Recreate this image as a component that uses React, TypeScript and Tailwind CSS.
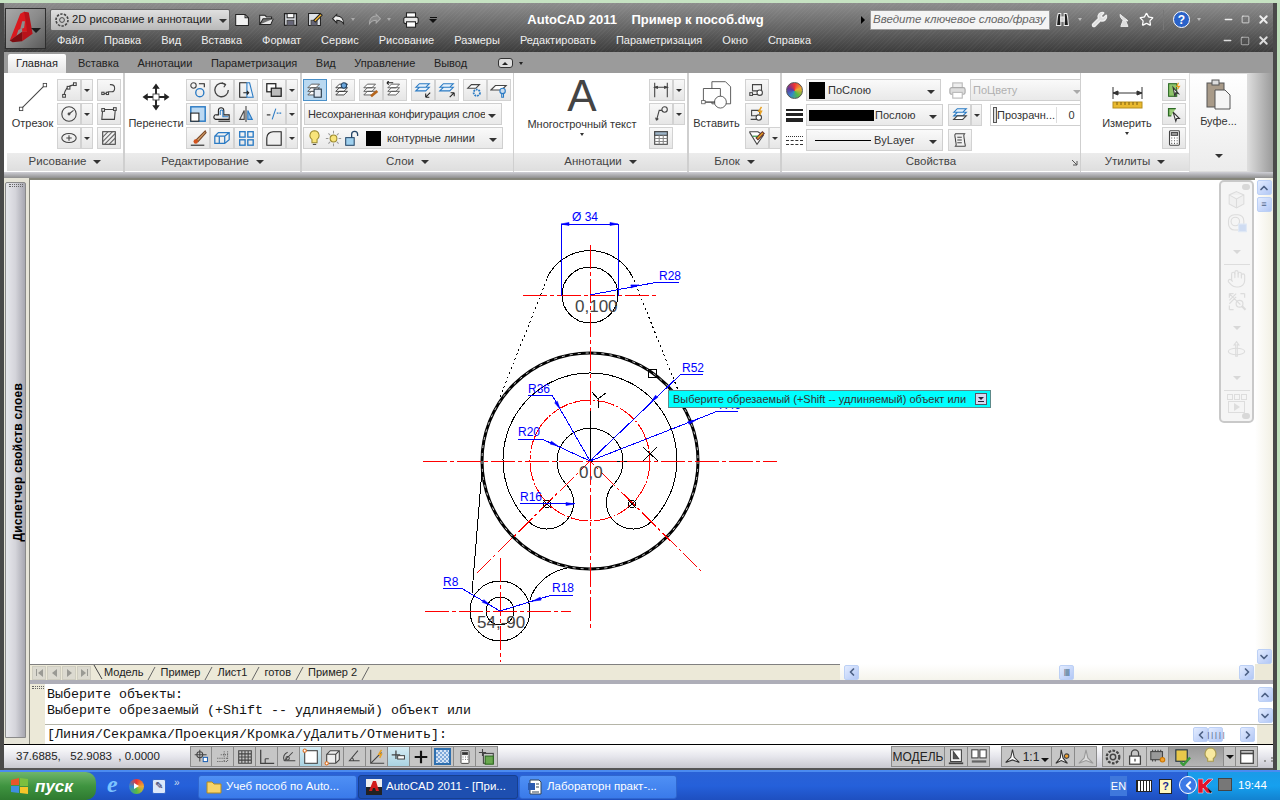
import type { ReactNode } from "react"
import { ChevronLeft, ChevronRight, ChevronUp, ChevronDown, Hand, Star, Wrench, Minus, X, Square } from "lucide-react"

const Ic = ({ children, s = 18, cls = "" }: { children: ReactNode; s?: number; cls?: string }) => (
  <svg viewBox="0 0 20 20" width={s} height={s} fill="none" stroke="#444" strokeWidth="1.2" className={cls}>
    {children}
  </svg>
)

const Caret = ({ cls = "border-t-[#333]" }: { cls?: string }) => (
  <span className={"inline-block w-0 h-0 border-x-[4px] border-x-transparent border-t-[4px] " + cls} />
)

const Btn = ({ children, w = "w-[24px]", active = false }: { children?: ReactNode; w?: string; active?: boolean }) => (
  <div
    className={
      "h-[22px] flex items-center justify-center border shrink-0 " +
      w +
      (active
        ? " bg-[#b9d8f0] border-[#4a90c8]"
        : " bg-gradient-to-b from-[#f8f8f8] to-[#e6e6e6] border-[#d2d2d2]")
    }
  >
    {children}
  </div>
)

const Split = ({ children }: { children: ReactNode }) => (
  <div className="flex">
    <Btn w="w-[24px]">{children}</Btn>
    <Btn w="w-[12px]">
      <span className="inline-block w-0 h-0 border-x-[3px] border-x-transparent border-t-[3px] border-t-[#333]" />
    </Btn>
  </div>
)

const Panel = ({ title, w, caret = true, launcher = false, children }: { title: string; w: string; caret?: boolean; launcher?: boolean; children: ReactNode }) => (
  <div className={"flex flex-col shrink-0 " + w}>
    <div className="h-[80px] bg-white flex overflow-hidden">{children}</div>
    <div className="h-[18px] bg-gradient-to-b from-[#ececec] to-[#dedede] flex items-center justify-center gap-[7px] text-[11.5px] text-[#444] relative">
      {title}
      {caret && <Caret />}
      {launcher && (
        <svg width="7" height="7" viewBox="0 0 7 7" stroke="#555" fill="none" className="absolute right-[2px] top-[6px]">
          <path d="M1 1l5 5M6 2v4H2" />
        </svg>
      )}
    </div>
  </div>
)

const Big = ({ label, w, children, arrow = false }: { label: string; w: string; children: ReactNode; arrow?: boolean }) => (
  <div className={"flex flex-col items-center shrink-0 pt-[6px] " + w}>
    <div className="h-[36px] flex items-center justify-center">{children}</div>
    <div className="text-[11px] text-[#333] mt-[1px] leading-[14px] whitespace-nowrap">{label}</div>
    {arrow && <span className="mt-[2px] inline-block w-0 h-0 border-x-[2px] border-x-transparent border-t-[3px] border-t-[#333]" />}
  </div>
)

const Col = ({ children, cls = "" }: { children: ReactNode; cls?: string }) => (
  <div className={"flex flex-col gap-[2px] pt-[6px] shrink-0 " + cls}>{children}</div>
)

const Combo = ({ children, w, disabled = false }: { children: ReactNode; w: string; disabled?: boolean }) => (
  <div
    className={
      "h-[22px] flex items-center border border-[#cfcfcf] bg-gradient-to-b from-[#fafafa] to-[#e9e9e9] px-[2px] text-[11px] shrink-0 " +
      w +
      (disabled ? " text-[#b0b0b0]" : " text-[#333]")
    }
  >
    <div className="flex-1 flex items-center gap-[2px] overflow-hidden whitespace-nowrap">{children}</div>
    <span className="mx-[3px]">
      <Caret cls={disabled ? "border-t-[#aaa]" : "border-t-[#333]"} />
    </span>
  </div>
)

const Blk = ({ w }: { w: string }) => <span className={"inline-block h-[17px] bg-black shrink-0 " + w} />

const ScrollBtn = ({ children }: { children: ReactNode }) => (
  <div className="w-[15px] h-[15px] rounded-[2px] bg-gradient-to-br from-[#e3ecff] to-[#b2c7f5] border border-[#bcd0f5] flex items-center justify-center text-[#4d6185] shrink-0">
    {children}
  </div>
)

function Logo() {
  return (
    <div className="w-[41px] h-[41px] ml-[1px] border border-[#2e2e2e] bg-gradient-to-br from-[#a8a8a8] via-[#8a8a8a] to-[#5a5a5a] relative shrink-0">
      <svg viewBox="0 0 41 41" width="39" height="39">
        <polygon points="4,33 15,5 19,3 24,4 22,24 17,24 17,20 13,22 11,28" fill="#d9191f" />
        <polygon points="19,3 24,4 28,26 17,34 17,24 22,24 21,14" fill="#b8121a" />
        <polygon points="4,33 11,28 17,24 17,34 7,35" fill="#7e0d12" />
        <polygon points="17,13 20,13 19,20 15,21" fill="#8d8d8d" />
      </svg>
      <span className="absolute right-[4px] top-[19px] w-0 h-0 border-x-[5px] border-x-transparent border-t-[5px] border-t-[#1c1c1c]" />
    </div>
  )
}

function TitleBar() {
  const menus = ["Файл", "Правка", "Вид", "Вставка", "Формат", "Сервис", "Рисование", "Размеры", "Редактировать", "Параметризация", "Окно", "Справка"]
  return (
    <div className="h-[49px] bg-[repeating-linear-gradient(135deg,rgba(255,255,255,0.035)_0_1px,transparent_1px_3px),linear-gradient(#8d8d8d,#666,#3c3c3c)] flex pt-[5px] shrink-0 font-['Liberation_Sans',sans-serif]">
      <Logo />
      <div className="flex-1 flex flex-col pl-[4px]">
        <div className="h-[23px] flex items-center">
          <div className="w-[180px] h-[22px] bg-gradient-to-b from-[#e0e0e0] to-[#b9b9b9] border border-[#666] flex items-center pl-[3px] text-[11.2px] text-[#222] rounded-[2px] shrink-0">
            <Ic s={16}>
              <circle cx="10" cy="10" r="3" />
              <circle cx="10" cy="10" r="7.5" strokeDasharray="3 1.6" strokeWidth="2" />
            </Ic>
            <span className="ml-[2px] flex-1 whitespace-nowrap">2D рисование и аннотации</span>
            <span className="mr-[2px]">
              <Caret />
            </span>
          </div>
          <div className="flex items-center ml-[4px] gap-[7px] w-[262px] shrink-0">
            <Ic s={17}>
              <path d="M2 4h11l4 4v9H2z" fill="#f2f2f2" stroke="#222" />
              <path d="M13 4v4h4" stroke="#222" />
            </Ic>
            <Ic s={17}>
              <path d="M2 16V5h6l2 2h6v2H6l-4 7h13l3-7" fill="#e8e8e8" stroke="#222" />
            </Ic>
            <Ic s={17}>
              <path d="M3 3h14v14H3z" fill="#dfe3e8" stroke="#222" strokeWidth="1.5" />
              <rect x="6" y="3" width="8" height="5" fill="#fff" stroke="#222" />
              <rect x="6" y="11" width="8" height="6" fill="#667" />
            </Ic>
            <Ic s={17}>
              <path d="M3 3h14v14H3z" fill="#dfe3e8" stroke="#222" />
              <rect x="6" y="11" width="7" height="6" fill="#667" />
              <path d="M9 11l8-8 2 2-8 8z" fill="#f5b52a" stroke="#222" />
            </Ic>
            <div className="flex items-center gap-[4px]">
              <Ic s={17}>
                <path d="M8 4L3 9l5 5V11c4 0 6 1 8 4 0-6-3-9-8-9z" fill="#eee" stroke="#222" />
              </Ic>
              <span className="inline-block w-0 h-0 border-x-[2px] border-x-transparent border-t-[3px] border-t-[#aaa]" />
            </div>
            <div className="flex items-center gap-[4px] ml-[4px]">
              <Ic s={17}>
                <path d="M12 4l5 5-5 5V11c-4 0-6 1-8 4 0-6 3-9 8-9z" fill="#8a8a8a" stroke="#aaa" />
              </Ic>
              <span className="inline-block w-0 h-0 border-x-[2px] border-x-transparent border-t-[3px] border-t-[#aaa]" />
            </div>
            <span className="ml-[4px]">
              <Ic s={18}>
                <rect x="5" y="2" width="10" height="5" fill="#fff" stroke="#222" />
                <rect x="2" y="7" width="16" height="7" rx="2" fill="#e8e8e8" stroke="#222" />
                <rect x="5" y="12" width="10" height="6" fill="#fff" stroke="#222" />
              </Ic>
            </span>
            <div className="flex flex-col items-center ml-[2px]">
              <span className="w-[7px] h-[1px] bg-[#111] mb-[1px]" />
              <Caret cls="border-t-[#111]" />
            </div>
          </div>
          <div className="w-[299px] text-center text-white font-bold text-[13px] whitespace-pre shrink-0">
            AutoCAD 2011{"    "}Пример к пособ.dwg
          </div>
          <div className="flex items-center ml-[66px]">
            <span className="inline-block w-0 h-0 border-y-[4px] border-y-transparent border-l-[4px] border-l-black mr-[5px]" />
            <div className="w-[180px] h-[20px] bg-[#f4f4f4] border border-[#999] text-[11.5px] italic text-[#666] flex items-center pl-[2px] whitespace-nowrap shrink-0">
              Введите ключевое слово/фразу
            </div>
            <div className="flex items-center ml-[4px] text-white">
              <Ic s={17}>
                <path d="M3 17l1-10 1-4h3v14zM12 17V3h3l1 4 1 10z" fill="#1c1c1c" stroke="#eee" />
                <path d="M8 7h4v5H8z" fill="#ccc" stroke="#eee" />
              </Ic>
              <span className="inline-block w-0 h-0 border-x-[2px] border-x-transparent border-t-[3px] border-t-[#bbb] ml-[7px]" />
              <Wrench size={17} color="#eee" fill="#ddd" className="ml-[9px]" />
              <span className="ml-[8px]">
                <Ic s={16}>
                  <path d="M5 3a8 8 0 0 0 10 8zM9 10l-3 8h9l-3-7" fill="#ddd" stroke="#eee" />
                </Ic>
              </span>
              <Star size={15} color="#fff" fill="#777" className="ml-[7px]" />
              <span className="w-[1px] h-[20px] bg-[#777] ml-[9px]" />
              <div className="w-[17px] h-[17px] rounded-full bg-[#2a62c8] border border-white text-white font-bold text-[12px] flex items-center justify-center ml-[9px]">?</div>
              <span className="inline-block w-0 h-0 border-x-[2px] border-x-transparent border-t-[3px] border-t-[#bbb] ml-[7px]" />
            </div>
          </div>
          <div className="flex items-center ml-auto mr-[3px] gap-[7px]">
            <Minus size={11} color="#eee" strokeWidth={3} />
            <Square size={9} color="#eee" strokeWidth={2} />
            <X size={13} color="#eee" strokeWidth={3.5} />
          </div>
        </div>
        <div className="flex-1 flex items-center text-[11px] text-[#eee] gap-[20px] pl-[7px] pb-[2px]">
          {menus.map(m => (
            <span key={m}>{m}</span>
          ))}
          <div className="flex items-center ml-auto mr-[3px] gap-[7px]">
            <Minus size={11} color="#ddd" strokeWidth={3} />
            <Square size={10} color="#ddd" strokeWidth={1.5} />
            <X size={13} color="#ddd" strokeWidth={3.5} />
          </div>
        </div>
      </div>
    </div>
  )
}

function Tabs() {
  const tabs = ["Вставка", "Аннотации", "Параметризация", "Вид", "Управление", "Вывод"]
  return (
    <div className="h-[21px] bg-[#9b9b9b] flex items-end shrink-0 pl-[4px] text-[11px] text-[#222]">
      <div className="w-[58px] h-[19px] bg-gradient-to-b from-white to-[#e4e4e4] rounded-t-[2px] flex items-center justify-center">Главная</div>
      <div className="flex items-center h-[20px] gap-[18.500px] ml-[12px]">
        {tabs.map(t => (
          <span key={t}>{t}</span>
        ))}
        <span className="flex items-center gap-[6px] ml-[12px]">
          <span className="w-[15px] h-[10px] rounded-[3px] bg-[#ddd] border border-[#333] flex items-center justify-center">
            <span className="inline-block w-0 h-0 border-x-[3px] border-x-transparent border-b-[3px] border-b-[#222]" />
          </span>
          <span className="inline-block w-0 h-0 border-x-[2px] border-x-transparent border-t-[3px] border-t-[#222]" />
        </span>
      </div>
    </div>
  )
}

const B = "#2b7bc4"

function DrawPanel() {
  return (
    <>
      <Big label="Отрезок" w="w-[45px] ml-[3px]">
        <Ic s={34}>
          <path d="M3 17L17 3" strokeWidth="0.6" />
          <rect x="2" y="16" width="2" height="2" strokeWidth="0.5" fill="#fff" />
          <rect x="16" y="2" width="2" height="2" strokeWidth="0.5" fill="#fff" />
        </Ic>
      </Big>
      <Col cls="ml-[2px]">
        <Split>
          <Ic>
            <path d="M4 17C5 10 9 5 16 4" />
            <rect x="3" y="15" width="3" height="3" fill="#fff" />
            <rect x="8" y="6" width="3" height="3" fill="#fff" />
            <rect x="15" y="2" width="3" height="3" fill="#fff" />
          </Ic>
        </Split>
        <Split>
          <Ic>
            <circle cx="10" cy="10" r="8" />
            <circle cx="10" cy="10" r="1" />
            <path d="M10 10l5-4" />
          </Ic>
        </Split>
        <Split>
          <Ic>
            <ellipse cx="10" cy="10" rx="8" ry="5" />
            <path d="M7 10h6M10 7v6" />
          </Ic>
        </Split>
      </Col>
      <Col cls="ml-[4px]">
        <Btn>
          <Ic>
            <path d="M3 14h2c3 0 3-2 5-2h3c4 0 5-8-1-8h-1" />
            <rect x="2" y="12.5" width="2.5" height="2.5" fill="#fff" />
            <rect x="7" y="12.5" width="2.5" height="2.5" fill="#fff" />
          </Ic>
        </Btn>
        <Btn>
          <Ic>
            <path d="M3 5h14l-1 11H2z" />
            <rect x="2" y="4" width="3" height="3" fill="#fff" />
            <rect x="15" y="3" width="3" height="3" fill="#fff" />
          </Ic>
        </Btn>
        <Btn>
          <Ic>
            <rect x="3" y="3" width="14" height="14" />
            <path d="M3 9l6-6M3 14L14 3M5 17L17 5M10 17l7-7" stroke="#666" />
          </Ic>
        </Btn>
      </Col>
    </>
  )
}

function EditPanel() {
  return (
    <>
      <Big label="Перенести" w="w-[54px] ml-[4px]">
        <Ic s={30}>
          <path d="M10 1L7.500 4.500h5zM10 19l-2.500-3.500h5zM1 10l3.500-2.500v5zM19 10l-3.500-2.500v5z" fill="#222" stroke="none" />
          <path d="M10 4v4M10 12v4M4 10h4M12 10h4" strokeWidth="1.300" stroke="#222" />
          <rect x="8" y="8" width="4" height="4" fill="#fff" strokeWidth="0.6" />
        </Ic>
      </Big>
      <Col cls="ml-[3px]">
        <div className="flex">
          <Btn>
            <Ic>
              <circle cx="5" cy="5" r="3" />
              <circle cx="12" cy="13" r="4.500" stroke={B} strokeWidth="1.500" />
              <path d="M11 3h6v4" stroke="#222" />
            </Ic>
          </Btn>
          <Btn>
            <Ic>
              <path d="M14 4A7.500 7.500 0 1 0 17 10" strokeWidth="1.500" />
              <path d="M10 2l4 2-2 3" strokeWidth="1.200" />
            </Ic>
          </Btn>
          <Btn>
            <Ic>
              <path d="M11 2H3v16h8" stroke="#222" />
              <path d="M11 2h3l4 16h-7z" stroke={B} fill="#e8f1fa" />
              <path d="M7 13h6M11 11l2 2-2 2" stroke="#222" />
            </Ic>
          </Btn>
        </div>
        <div className="flex">
          <Btn>
            <Ic>
              <rect x="2" y="2" width="16" height="16" stroke={B} strokeWidth="1.600" fill="#bcd9f2" />
              <rect x="2" y="9" width="9" height="9" stroke="#222" fill="#fff" />
            </Ic>
          </Btn>
          <Btn>
            <Ic>
              <path d="M3 16h15v-5h-6V6a3 3 0 0 0-6 0v5H4a2.500 2.500 0 0 0-1 5z" stroke="#222" />
              <path d="M6 18h13" stroke="#222" />
              <path d="M8 11V7a1.500 1.500 0 0 1 3 0v6h6" stroke={B} />
            </Ic>
          </Btn>
          <Btn>
            <Ic>
              <path d="M10 1v18" />
              <path d="M8 6L3 16h5z" />
              <path d="M12 6l5 10h-5z" stroke={B} fill="#8fbde6" />
            </Ic>
          </Btn>
        </div>
        <div className="flex">
          <Btn>
            <Ic>
              <path d="M18 2L8 12l2 2L19 4z" fill="#d9a26a" stroke="#7a4a2a" />
              <circle cx="7.500" cy="14" r="2.500" fill="#d2521c" stroke="none" />
              <path d="M2 18h15" stroke="#222" />
            </Ic>
          </Btn>
          <Btn>
            <Ic>
              <path d="M2 8l4-4h12v8l-5 4H2zM2 8h11v8M13 8l5-4" stroke={B} strokeWidth="1.400" />
              <path d="M7 8v8" stroke={B} strokeWidth="1.400" />
            </Ic>
          </Btn>
          <Btn>
            <Ic>
              <rect x="3" y="3" width="6" height="6" stroke={B} strokeWidth="1.500" />
              <rect x="12" y="3" width="6" height="6" stroke={B} strokeWidth="1.500" />
              <rect x="3" y="12" width="6" height="6" stroke={B} strokeWidth="1.500" />
              <rect x="12" y="12" width="6" height="6" stroke={B} strokeWidth="1.500" />
            </Ic>
          </Btn>
        </div>
      </Col>
      <Col cls="ml-[4px]">
        <Split>
          <Ic>
            <rect x="2" y="3" width="10" height="9" fill="#fff" strokeWidth="1.400" stroke="#222" />
            <rect x="7" y="8" width="11" height="9" fill="#bbb" stroke="#222" strokeWidth="1.400" />
          </Ic>
        </Split>
        <Split>
          <Ic>
            <path d="M2 11h4" stroke="#222" />
            <path d="M13 9h6" stroke={B} strokeDasharray="2 1" />
            <path d="M8 16l4-12" stroke={B} />
          </Ic>
        </Split>
        <Split>
          <Ic>
            <path d="M2 18V10c0-4 3-7 7-7h9v15z" fill="#efefef" stroke="#222" />
          </Ic>
        </Split>
      </Col>
    </>
  )
}

const Stack = ({ extra, thin = "#555" }: { extra?: ReactNode; thin?: string }) => (
  <Ic>
    <g stroke={thin} strokeWidth="1">
      <path d="M2 7.500l4-4h9l-4 4zM2 11.500l4-4h9l-4 4zM2 15.500l4-4h9l-4 4z" fill="#fff" />
    </g>
    {extra}
  </Ic>
)

function LayerPanel() {
  return (
    <div className="flex flex-col gap-[2px] pt-[6px] pl-[1px]">
      <div className="flex">
        <Btn active>
          <Stack extra={<rect x="9" y="9" width="8" height="9" fill="#dfe8f2" stroke="#234" />} />
        </Btn>
        <div className="w-[4px]" />
        <Btn>
          <Stack thin="#333" extra={<circle cx="11" cy="5" r="3" fill="#6aa6dc" stroke="#246" />} />
        </Btn>
        <div className="w-[4px]" />
        <Btn>
          <Stack extra={<path d="M10 17l7-6" stroke="#b5651d" strokeWidth="3" />} />
        </Btn>
        <Btn>
          <Stack extra={<path d="M1 2h7M1 2l2-2M1 2l2 2" stroke="#222" />} />
        </Btn>
        <div className="w-[4px]" />
        <Btn>
          <Ic>
            <path d="M2 7l4-4h11l-4 4zM2 11l4-4h11l-4 4z" stroke={B} fill="#e6f1fb" />
            <path d="M18 13l-5 5M13 18h4M13 18v-4" stroke="#222" />
          </Ic>
        </Btn>
        <Btn>
          <Ic>
            <path d="M2 7l4-4h11l-4 4zM2 11l4-4h11l-4 4z" stroke={B} fill="#e6f1fb" />
            <path d="M13 18l5-5M18 13h-4M18 13v4" stroke="#222" />
          </Ic>
        </Btn>
        <div className="w-[4px]" />
        <Btn>
          <Ic>
            <path d="M2 8l4-4h9l-4 4z" fill="#fff" />
            <circle cx="12" cy="13" r="3.500" stroke={B} strokeWidth="2" strokeDasharray="2 1" />
          </Ic>
        </Btn>
        <Btn>
          <Ic>
            <path d="M1 10l5-5h12l-5 5z" fill="#fff" />
            <circle cx="14" cy="11" r="3" fill="#cde" stroke={B} />
            <path d="M13 14v4h2v-4" stroke={B} />
          </Ic>
        </Btn>
      </div>
      <Combo w="w-[198px] ml-[1px]">
        <span className="px-[1px] tracking-[-0.15px]">Несохраненная конфигурация слоев</span>
      </Combo>
      <Combo w="w-[200px]">
        <Ic s={17}>
          <path d="M10 1a5.500 5.500 0 0 0-3 10v4h6v-4a5.500 5.500 0 0 0-3-10z" fill="#f8e47a" stroke="#9a8a30" />
          <path d="M8 17h4" />
        </Ic>
        <Ic s={17}>
          <circle cx="10" cy="10" r="4" fill="#f8e47a" stroke="#9a8a30" />
          <path d="M10 1v3M10 16v3M1 10h3M16 10h3M4 4l2 2M14 14l2 2M16 4l-2 2M4 16l2-2" stroke="#999" />
        </Ic>
        <Ic s={17}>
          <rect x="2" y="9" width="10" height="9" fill="#9fd0ee" stroke="#246" />
          <path d="M9 9V5a3.500 3.500 0 0 1 7 0v2" stroke="#246" strokeWidth="1.500" />
        </Ic>
        <span className="w-[15px] h-[15px] bg-black mx-[3px] shrink-0" />
        <span className="ml-[1px]">контурные линии</span>
      </Combo>
    </div>
  )
}

function AnnoPanel() {
  return (
    <>
      <div className="w-[110px] ml-[13px] flex flex-col items-center pt-[1px] shrink-0">
        <span className="text-[44px] leading-[44px] text-[#444]">A</span>
        <span className="text-[11px] text-[#333] leading-[14px] -mt-[1px] whitespace-nowrap">Многострочный текст</span>
        <span className="mt-[2px] inline-block w-0 h-0 border-x-[2px] border-x-transparent border-t-[3px] border-t-[#333]" />
      </div>
      <Col cls="ml-[12px]">
        <Split>
          <Ic>
            <path d="M3 2v16M17 2v16M3 7h14" />
            <path d="M3 7l3-1v2zM17 7l-3-1v2z" fill="#444" />
          </Ic>
        </Split>
        <Split>
          <Ic>
            <circle cx="14" cy="5" r="3" />
            <path d="M11 6H8L5 17M5 17l-1-3M5 17l2-2" />
          </Ic>
        </Split>
        <Btn w="w-[24px]">
          <Ic>
            <rect x="3" y="3" width="14" height="14" fill="#fff" />
            <rect x="3" y="3" width="14" height="4" fill="#9db4c8" />
            <path d="M3 10.5h14M3 13.8h14M8 7v10M12.5 7v10" stroke="#888" />
          </Ic>
        </Btn>
      </Col>
    </>
  )
}

function BlockPanel() {
  return (
    <>
      <Big label="Вставить" w="w-[47px] ml-[4px]">
        <Ic s={34}>
          <path d="M7 1h8l3 3v10H7z" fill="#fff" strokeWidth="0.5" />
          <path d="M2 5h10v8H2z" fill="#fff" strokeWidth="0.5" />
          <circle cx="12" cy="13" r="3.5" fill="#fff" strokeWidth="0.5" />
          <rect x="1" y="12" width="2" height="2" fill="#fff" strokeWidth="0.4" />
          <path d="M3 13h6" strokeWidth="0.5" />
        </Ic>
      </Big>
      <Col cls="ml-[5px]">
        <Btn>
          <Ic>
            <path d="M5 4h10v7H5zM3 15h8" />
            <circle cx="13" cy="13" r="3" fill="#fff" />
            <rect x="2" y="13" width="3" height="3" fill="#fff" />
          </Ic>
        </Btn>
        <Btn>
          <Ic>
            <path d="M4 6h9v6H4zM3 16h7" />
            <circle cx="12" cy="14" r="3" fill="#fff" />
            <path d="M15 2l-3 5h3l-2 4" stroke="#e8a020" strokeWidth="1.6" />
          </Ic>
        </Btn>
        <Split>
          <Ic>
            <path d="M2 4l8 13 7-10-6-4H2z" fill="#fff" />
            <path d="M9 10l7-7 2 2-7 7z" fill="#e8a020" stroke="#633" />
            <path d="M5 8h6" stroke="#283" />
          </Ic>
        </Split>
      </Col>
    </>
  )
}

function PropsPanel() {
  return (
    <>
      <Col cls="ml-[4px] !gap-[3px]">
        <div className="h-[22px] flex items-center">
          <span className="w-[17px] h-[17px] rounded-full bg-[conic-gradient(#e33,#ea3,#5b4,#38c,#639,#e33)] border border-[#555]" />
        </div>
        <div className="h-[22px] flex flex-col justify-center gap-[2px]">
          <span className="w-[17px] h-[2px] bg-[#222]" />
          <span className="w-[17px] h-[3px] bg-[#222]" />
          <span className="w-[17px] h-[4px] bg-[#222]" />
        </div>
        <div className="h-[22px] flex flex-col justify-center gap-[3px]">
          <span className="w-[17px] h-0 border-t border-dotted border-[#333]" />
          <span className="w-[17px] h-0 border-t border-dashed border-[#333]" />
          <span className="w-[17px] h-0 border-t border-dashed border-[#333]" />
        </div>
      </Col>
      <Col cls="ml-[3px] !gap-[3px]">
        <Combo w="w-[135px]">
          <Blk w="w-[16px]" />
          <span className="ml-[1px]">ПоСлою</span>
        </Combo>
        <Combo w="w-[137px]">
          <Blk w="w-[65px] !h-[11px]" />
          <span className="-ml-[1px]">Послою</span>
        </Combo>
        <Combo w="w-[137px]">
          <span className="w-[56px] h-[1px] bg-black ml-[6px]" />
          <span className="ml-[1px]">ByLayer</span>
        </Combo>
      </Col>
      <Col cls="ml-[5px] !gap-[3px]">
        <div className="flex items-center h-[22px]">
          <Ic s={19}>
            <rect x="5" y="2" width="10" height="5" fill="#eee" stroke="#bbb" />
            <rect x="2" y="7" width="16" height="7" rx="2" fill="#ddd" stroke="#aaa" />
            <rect x="5" y="12" width="10" height="6" fill="#fff" stroke="#bbb" />
          </Ic>
          <span className="ml-[3px]">
            <Combo w="w-[117px]" disabled>
              ПоЦвету
            </Combo>
          </span>
        </div>
        <div className="flex items-center h-[22px]">
          <div className="flex">
            <Btn w="w-[23px]">
              <Ic>
                <path d="M3 7l4-4h10l-4 4zM3 11l4-4h10l-4 4z" stroke={B} fill="#e6f1fb" />
                <path d="M3 15l4-4h10l-4 4z" fill="#fff" />
              </Ic>
            </Btn>
            <Btn w="w-[11px]">
              <span className="inline-block w-0 h-0 border-x-[3px] border-x-transparent border-t-[3px] border-t-[#333]" />
            </Btn>
          </div>
          <div className="ml-[8px] w-[97px] h-[22px] border border-[#cfcfcf] bg-white flex items-center text-[11px] text-[#333]">
            <span className="w-[4px] h-[16px] ml-[2px] border border-[#555] bg-[#ddd]" />
            <span className="flex-1 whitespace-nowrap">Прозрачн...</span>
            <span className="w-[30px] text-center border-l border-[#ddd]">0</span>
          </div>
        </div>
        <Btn>
          <Ic>
            <path d="M5 3h10c-2 2 0 5 0 8s2 6 0 6H5c2-2 0-4 0-7S3 4 5 3z" fill="#f0f0f0" />
            <path d="M7 7h5M7 10h5M7 13h5" />
          </Ic>
        </Btn>
      </Col>
    </>
  )
}

function UtilPanel() {
  return (
    <>
      <Big label="Измерить" w="w-[50px] ml-[21px]" arrow>
        <svg width="31" height="28" viewBox="0 0 31 28" fill="none" stroke="#333">
          <path d="M1 4v12M30 4v12M1 10h29" />
          <path d="M1 10l5-2v4zM30 10l-5-2v4z" fill="#333" />
          <rect x="1" y="19" width="29" height="6" fill="#e9b92f" stroke="#b58d1c" />
          <path d="M5 19v3M9 19v3M13 19v3M17 19v3M21 19v3M25 19v3" stroke="#7a5d10" />
        </svg>
      </Big>
      <Col cls="ml-[10px]">
        <Btn>
          <Ic>
            <rect x="4" y="3" width="9" height="14" fill="#8ec46a" stroke="#2c6a25" />
            <path d="M9 7l6 7-3-1-1 4z" fill="#fff" stroke="#333" />
            <path d="M15 2l-2 4h3l-2 3" stroke="#e8a020" strokeWidth="1.3" />
          </Ic>
        </Btn>
        <Btn>
          <Ic>
            <path d="M12 4H4v8h3" stroke="#2c6a25" strokeWidth="1.5" fill="#9ccf7a" />
            <path d="M9 8l7 7-3 0-1 3z" fill="#fff" stroke="#333" />
          </Ic>
        </Btn>
        <Btn>
          <Ic>
            <rect x="5" y="2" width="11" height="16" rx="1" fill="#fff" />
            <rect x="7" y="4" width="7" height="3" fill="#aaa" />
            <path d="M7 10h1M10 10h1M13 10h1M7 13h1M10 13h1M13 13h1M7 16h1M10 16h1M13 16h1" strokeWidth="1.2" />
          </Ic>
        </Btn>
      </Col>
    </>
  )
}

function Clipboard() {
  return (
    <div className="w-[59px] h-[99px] bg-gradient-to-b from-white to-[#ececec] border border-[#ddd] flex flex-col items-center shrink-0">
      <div className="pt-[5px] h-[38px]">
        <svg width="26" height="31" viewBox="0 0 26 31" fill="none" stroke="#555">
          <rect x="1" y="4" width="17" height="24" fill="#a89a88" />
          <rect x="6" y="1" width="7" height="5" fill="#ddd" />
          <path d="M9 11h10l5 5v14H9z" fill="#f5f5f5" />
        </svg>
      </div>
      <span className="text-[11px] text-[#333] leading-[14px] mt-[2px]">Буфе...</span>
      <span className="mt-auto mb-[6px]">
        <Caret />
      </span>
    </div>
  )
}

function Ribbon() {
  return (
    <div className="h-[99px] flex shrink-0 bg-white pl-[3px] font-['Liberation_Sans',sans-serif]">
      <Panel title="Рисование" w="w-[116px]">
        <DrawPanel />
      </Panel>
      <div className="w-[2px] bg-[#cfcfcf]" />
      <Panel title="Редактирование" w="w-[175px]">
        <EditPanel />
      </Panel>
      <div className="w-[2px] bg-[#cfcfcf]" />
      <Panel title="Слои" w="w-[211px]">
        <LayerPanel />
      </Panel>
      <div className="w-[1px] bg-[#cfcfcf]" />
      <Panel title="Аннотации" w="w-[173px]">
        <AnnoPanel />
      </Panel>
      <div className="w-[2px] bg-[#cfcfcf]" />
      <Panel title="Блок" w="w-[91px]">
        <BlockPanel />
      </Panel>
      <div className="w-[2px] bg-[#cfcfcf]" />
      <Panel title="Свойства" w="w-[298px]" caret={false} launcher>
        <PropsPanel />
      </Panel>
      <div className="w-[1px] bg-[#cfcfcf]" />
      <Panel title="Утилиты" w="w-[108px]">
        <UtilPanel />
      </Panel>
      <Clipboard />
      <div className="flex-1 bg-gradient-to-r from-[#dcdcdc] to-[#9a9a9a]" />
    </div>
  )
}

const RED = "#ff0000"
const BLUE = "#0000ff"

function Arrow({ x, y, a }: { x: number; y: number; a: number }) {
  return <polygon points="0,0 -8,-1.5 -8,1.5" fill={BLUE} stroke={BLUE} strokeWidth="0.6" transform={`translate(${x} ${y}) rotate(${a})`} />
}

function Drawing() {
  const dim = "font-['Liberation_Sans',sans-serif]"
  return (
    <svg viewBox="30 180 1225 484" width="1225" height="484" className={"block " + dim} fill="none">
      <g stroke="#000" strokeWidth="1" shapeRendering="crispEdges">
        <path d="M547 278A47.5 47.5 0 0 1 633 278" />
        <circle cx="590" cy="295" r="28" />
        <path d="M547 279L500 397M634 280L678 390" strokeDasharray="2 3" />
        <path d="M566 484A33 33 0 1 1 614 484A26 26 0 1 0 652 521A87 87 0 1 0 528 521A26 26 0 0 0 566 484" />
        <circle cx="500" cy="611" r="30" />
        <circle cx="500" cy="611" r="14" />
        <path d="M482 470L472 593" />
        <path d="M530 600C534 585 548 572 567 568" />
        <path d="M590 411V461H640" />
        <path d="M592 392L598 399L606 393M598 399V408" />
        <path d="M643 447L658 461M642 462L657 447" />
      </g>
      <circle cx="590" cy="461" r="108" stroke="#000" strokeWidth="3" />
      <circle cx="590" cy="461" r="108" stroke="#fff" strokeWidth="0.8" strokeDasharray="3 5" />
      <g stroke={RED} strokeWidth="1" shapeRendering="crispEdges">
        <path d="M523 295H657M423 461H777M425 611H571" strokeDasharray="24 3 4 3" />
        <path d="M590 245V411M590 461V628M500 558V662" strokeDasharray="24 3 4 3" />
        <path d="M477 573L590 461L702 572" strokeDasharray="20 3 3 3" />
        <path d="M537 432A60 60 0 0 1 643 432M650 461A60 60 0 0 1 530 461" strokeDasharray="18 2 2 2" />
        <path d="M537 432A60 60 0 0 0 530 461" strokeDasharray="18 2 2 2" />
        <path d="M643 432A60 60 0 0 1 650 461" strokeDasharray="18 2 2 2" />
      </g>
      <g stroke="#000" shapeRendering="crispEdges">
        <circle cx="547" cy="504" r="3.5" />
        <circle cx="632" cy="504" r="3.5" />
        <path d="M543 500L551 508M551 500L543 508M628 500L636 508M636 500L628 508" />
        <rect x="648.5" y="369.5" width="8" height="8" />
      </g>
      <g stroke={BLUE} strokeWidth="1" shapeRendering="crispEdges">
        <path d="M561 224V296M618 224V296M561 224H618" />
        <path d="M679 282H658L590 295" />
        <path d="M703 374H681L590 461" />
        <path d="M738 411H718L590 461" />
        <path d="M528 395H552L590 461" />
        <path d="M518 439H542L590 461" />
        <path d="M520 503H575" />
        <path d="M443 588H461L500 611" />
        <path d="M573 595H552L500 611" />
      </g>
      <Arrow x={561} y={224} a={180} />
      <Arrow x={618} y={224} a={0} />
      <Arrow x={639} y={285} a={-10} />
      <Arrow x={651} y={402} a={135} />
      <Arrow x={696} y={420} a={-21} />
      <Arrow x={560} y={409} a={60} />
      <Arrow x={558} y={446} a={25} />
      <Arrow x={574} y={504} a={0} />
      <Arrow x={490} y={605} a={30} />
      <Arrow x={533} y={601} a={163} />
      <g fill={BLUE} fontSize="12">
        <text x="572" y="221">Ø 34</text>
        <text x="659" y="280">R28</text>
        <text x="682" y="372">R52</text>
        <text x="719" y="409">R46</text>
        <text x="528" y="393">R36</text>
        <text x="518" y="436">R20</text>
        <text x="520" y="501">R16</text>
        <text x="443" y="586">R8</text>
        <text x="552" y="592">R18</text>
      </g>
      <g fill="#444" fontSize="17">
        <text x="575" y="312">0,100</text>
        <text x="579" y="478">0,0</text>
        <text x="477" y="628">54,-90</text>
      </g>
    </svg>
  )
}

function NavBar() {
  const c = "#dcdcdc"
  return (
    <div className="absolute left-[1189px] top-0 w-[35px] h-[243px] rounded-[5px] border-2 border-[#c9c9c9] bg-[#f5f5f5] flex flex-col items-center pt-[2px]">
      <span className="self-end mr-[2px] w-[8px] h-[8px] rounded-full bg-[#d8d8d8]" />
      <svg viewBox="0 0 24 24" width="25" height="25" fill="#f0f0f0" stroke={c} strokeWidth="1.3">
        <path d="M12 2l9 4v11l-9 5-9-5V6zM3 6l9 5 9-5M12 11v11" />
      </svg>
      <svg viewBox="0 0 24 24" width="26" height="26" fill="none" stroke={c} strokeWidth="1.3" className="mt-[3px]">
        <rect x="2" y="2" width="18" height="18" rx="7" />
        <circle cx="10" cy="10" r="5" />
        <rect x="14" y="13" width="9" height="9" fill="#cfdcf2" stroke="#dfe8f5" />
      </svg>
      <span className="mt-[4px]">
        <Caret cls="border-t-[#d8d8d8]" />
      </span>
      <span className="w-[26px] h-[1px] bg-[#ddd] mt-[3px]" />
      <Hand size={25} color={c} className="mt-[4px]" strokeWidth={1.4} />
      <svg viewBox="0 0 24 24" width="26" height="26" fill="none" stroke={c} strokeWidth="1.4" className="mt-[2px]">
        <path d="M3 3l13 13M3 15l8-8M11 3L3 11M3 3h5M3 3v5M3 22v-5M3 22h5M21 3v5M21 3h-5" />
        <circle cx="15" cy="15" r="4" />
        <path d="M18 18l4 4" strokeWidth="2.5" />
      </svg>
      <span className="mt-[2px]">
        <Caret cls="border-t-[#d8d8d8]" />
      </span>
      <svg viewBox="0 0 24 24" width="25" height="25" fill="#f4f4f4" stroke={c} strokeWidth="1.3" className="mt-[3px]">
        <path d="M12 2l3 4h-2v14h-2V6H9z" />
        <ellipse cx="12" cy="14" rx="10" ry="4" fill="none" />
      </svg>
      <span className="mt-[3px]">
        <Caret cls="border-t-[#d8d8d8]" />
      </span>
      <span className="w-[26px] h-[1px] bg-[#ddd] mt-[3px]" />
      <div className="flex gap-[1px] mt-[4px]">
        <span className="w-[6px] h-[6px] border border-[#ddd]" />
        <span className="w-[6px] h-[6px] border border-[#ddd]" />
        <span className="w-[6px] h-[6px] border border-[#ddd]" />
      </div>
      <div className="w-[17px] h-[14px] border border-[#ddd] mt-[1px] flex items-center justify-center">
        <span className="w-0 h-0 border-y-[4px] border-y-transparent border-l-[6px] border-l-[#ddd]" />
      </div>
      <span className="self-end mr-[2px] mt-auto mb-[2px] w-[8px] h-[8px] rounded-full bg-[#d8d8d8]" />
    </div>
  )
}

function Tooltip() {
  return (
    <div className="absolute left-[638px] top-[210px] w-[323px] h-[18px] bg-[#00ffff] border border-[#5d8a8a] flex items-center text-[11px] text-[#333] pl-[4px] font-['Liberation_Sans',sans-serif] whitespace-nowrap">
      <span className="flex-1">Выберите обрезаемый (+Shift -- удлиняемый) объект или</span>
      <span className="w-[12px] h-[12px] mr-[3px] bg-[#d8d8f0] border border-[#556] flex flex-col items-center justify-center">
        <span className="w-0 h-0 border-x-[3px] border-x-transparent border-t-[3px] border-t-[#223]" />
        <span className="w-[6px] h-[1px] bg-[#223] mt-[1px]" />
      </span>
    </div>
  )
}

function LayoutTabs() {
  const tabs = ["Пример", "Лист1", "готов", "Пример 2"]
  const Slash = () => (
    <svg width="9" height="14" viewBox="0 0 9 14" stroke="#666" className="mx-[4px]">
      <path d="M1 14L8 1" />
    </svg>
  )
  const Nav = ({ bar, left }: { bar?: boolean; left?: boolean }) => (
    <span className="w-[14px] h-[14px] bg-[#dcdad0] border border-[#cfcdc0] flex items-center justify-center gap-[1px]">
      {bar && left && <span className="w-[1px] h-[7px] bg-[#9a9a94]" />}
      <span className={"w-0 h-0 border-y-[4px] border-y-transparent " + (left ? "border-r-[5px] border-r-[#9a9a94]" : "border-l-[5px] border-l-[#9a9a94]")} />
      {bar && !left && <span className="w-[1px] h-[7px] bg-[#9a9a94]" />}
    </span>
  )
  return (
    <div className="h-[16px] flex shrink-0 items-stretch bg-[#ece9d8] text-[11px] text-[#222] font-['Liberation_Sans',sans-serif]">
      <div className="w-[810px] flex items-center border-t border-[#808080] pl-[2px] shrink-0">
        <div className="flex gap-[1px] w-[61px]">
          <Nav bar left />
          <Nav left />
          <Nav />
          <Nav bar />
        </div>
        <svg width="10" height="15" viewBox="0 0 10 15" stroke="#444">
          <path d="M1 0L9 14" />
        </svg>
        <span className="ml-[1px]">Модель</span>
        <Slash />
        {tabs.map(t => (
          <span key={t} className="flex items-center">
            {t}
            <Slash />
          </span>
        ))}
      </div>
      <div className="flex-1 flex items-center bg-gradient-to-b from-white to-[#f5f4ec] pl-[4px] pr-[1px]">
        <ScrollBtn>
          <ChevronLeft size={12} strokeWidth={3.5} />
        </ScrollBtn>
        <div className="w-[200px]" />
        <ScrollBtn>
          <span className="text-[8px] leading-none tracking-[-1px]">|||||</span>
        </ScrollBtn>
        <div className="flex-1" />
        <ScrollBtn>
          <ChevronRight size={12} strokeWidth={3.5} />
        </ScrollBtn>
      </div>
      <div className="w-[18px] bg-[#ece9d8]" />
    </div>
  )
}

function CommandArea() {
  return (
    <div className="h-[60px] flex shrink-0 bg-[#ece9d8]">
      <div className="w-[15px] flex flex-col items-center pt-[2px] shrink-0">
        <span className="w-[12px] h-[3px] border-y border-dotted border-[#666]" />
      </div>
      <div className="flex-1 flex flex-col bg-white font-['Liberation_Mono',monospace] text-[13.33px] text-[#111] min-w-0">
        <div className="h-[41px] flex border-b border-[#b5b5a8] shrink-0">
          <div className="flex-1 pl-[2px] pt-[3px] leading-[16px]">
            <div>Выберите объекты:</div>
            <div>Выберите обрезаемый (+Shift -- удлиняемый) объект или</div>
          </div>
          <div className="flex flex-col gap-[6px] pt-[3px] pr-[1px] items-center w-[15px]">
            <ScrollBtn>
              <ChevronUp size={12} strokeWidth={3.5} />
            </ScrollBtn>
            <ScrollBtn>
              <ChevronDown size={12} strokeWidth={3.5} />
            </ScrollBtn>
          </div>
        </div>
        <div className="flex-1 flex items-center pl-[2px] leading-none">
          <span className="flex-1 whitespace-nowrap">[Линия/Секрамка/Проекция/Кромка/уДалить/Отменить]:</span>
          <ScrollBtn>
            <ChevronLeft size={12} strokeWidth={3.5} />
          </ScrollBtn>
          <ScrollBtn>
            <span className="text-[8px] leading-none tracking-[-1px]">|||||</span>
          </ScrollBtn>
          <div className="w-[17px]" />
          <ScrollBtn>
            <ChevronRight size={12} strokeWidth={3.5} />
          </ScrollBtn>
          <div className="w-[16px] h-full bg-[#ece9d8] ml-[2px]" />
        </div>
      </div>
    </div>
  )
}

const St = ({ children, w = "w-[22px]", cls = "" }: { children?: ReactNode; w?: string; cls?: string }) => (
  <div className={"h-[21px] flex items-center justify-center border-y border-r border-[#8a8a8a] shrink-0 " + w + " " + (cls || "bg-[#c6c6c6]")}>
    {children}
  </div>
)

function StatusBar() {
  const on = "bg-gradient-to-b from-[#d6ecf4] to-[#aad3e2]"
  return (
    <div className="h-[24px] flex items-center shrink-0 bg-gradient-to-b from-white via-[#e6e6ec] to-[#c9c9d0] border-t border-black font-['Liberation_Sans',sans-serif] text-[#222]">
      <span className="w-[186px] pl-[12px] text-[11.5px] whitespace-pre shrink-0">37.6885,{"   "}52.9083{"  "}, 0.0000</span>
      <St cls="bg-[#c6c6c6] border-l">
        <Ic s={17}>
          <path d="M8 2v14M2 8h14" />
          <circle cx="8" cy="8" r="3.500" />
          <rect x="12" y="11" width="5" height="5" fill="#fff" stroke="#1a5fb4" />
        </Ic>
      </St>
      <St>
        <Ic s={17}>
          <path d="M4 16h12M16 4v12M4 12h12M12 4v12M8 8h8" strokeDasharray="1 1.5" />
        </Ic>
      </St>
      <St>
        <Ic s={18}>
          <path d="M3 3h14v14H3zM3 6.500h14M3 10h14M3 13.500h14M6.500 3v14M10 3v14M13.500 3v14" />
        </Ic>
      </St>
      <St>
        <Ic s={18}>
          <path d="M3 2v15h15" strokeWidth="1.400" />
          <path d="M8 12v5M8 12h4" />
        </Ic>
      </St>
      <St>
        <Ic s={17}>
          <path d="M5 15A7 7 0 0 1 9 5M5 15h13M5 15l10-10" />
          <circle cx="9" cy="12" r="2" />
        </Ic>
      </St>
      <St cls={on}>
        <Ic s={18}>
          <rect x="3" y="3" width="14" height="14" fill="#fff" />
          <circle cx="3" cy="3" r="1.800" fill="#fff" stroke="#e07020" />
        </Ic>
      </St>
      <St>
        <Ic s={18}>
          <path d="M3 7l4-4h10v10l-4 4H3zM3 7h10v10M13 7l4-4" fill="#eee" />
          <circle cx="3" cy="17" r="1.800" fill="#fff" stroke="#e07020" />
        </Ic>
      </St>
      <St>
        <Ic s={17}>
          <path d="M14 3L4 15h12M9 15a6 6 0 0 0-2-4" />
        </Ic>
      </St>
      <St>
        <Ic s={18}>
          <path d="M3 2v15h15M3 17L15 5" />
          <path d="M15 2l-3 5h3l-2 4" stroke="#e8a020" strokeWidth="1.600" />
        </Ic>
      </St>
      <St cls={on}>
        <Ic s={17}>
          <path d="M2 8h10M7 3v10" strokeWidth="1.500" />
          <rect x="9" y="9" width="8" height="4" fill="#fff" />
        </Ic>
      </St>
      <St>
        <Ic s={18}>
          <path d="M10 3v14M3 10h14" stroke="#111" strokeWidth="2.400" />
        </Ic>
      </St>
      <St cls="bg-[#c6c6c6]">
        <span className="w-[17px] h-[17px] border-2 border-[#2f6fae] bg-[repeating-conic-gradient(#7fa8da_0_25%,#d5e4f5_0_50%)] bg-[length:4px_4px]" />
      </St>
      <St>
        <Ic s={16}>
          <rect x="5" y="2" width="10" height="16" rx="1" fill="#fff" />
          <rect x="7" y="4" width="6" height="3" fill="#333" />
          <path d="M7 10h1M10 10h1M13 10h1M7 13h1M10 13h1M13 13h1" />
        </Ic>
      </St>
      <St>
        <Ic s={18}>
          <path d="M5 1v8M1 5h8" />
          <rect x="6" y="6" width="11" height="11" fill="none" />
          <rect x="8" y="9" width="9" height="9" fill="#6aa84f" stroke="#2f6b22" />
        </Ic>
      </St>
      <div className="flex-1" />
      <St w="w-[54px]" cls="bg-[#c6c6c6] border-l">
        <span className="text-[12px] tracking-[0px] text-[#222]">МОДЕЛЬ</span>
      </St>
      <St w="w-[23px]">
        <Ic s={18}>
          <rect x="4" y="2" width="12" height="13" fill="#fff" />
          <path d="M7 4v8h6z" fill="#555" />
          <path d="M2 17h16" strokeWidth="2" />
        </Ic>
      </St>
      <St>
        <Ic s={18}>
          <rect x="2" y="2" width="7" height="9" fill="#fff" />
          <rect x="11" y="2" width="7" height="9" fill="#fff" />
          <path d="M2 15h16" strokeWidth="2.500" stroke="#666" />
        </Ic>
      </St>
      <div className="w-[11px]" />
      <St w="w-[51px]" cls="bg-[#c6c6c6] border-l">
        <Ic s={17}>
          <path d="M10 2l2 9 6 6-8-3-8 3 6-6z" fill="#fff" stroke="#333" />
        </Ic>
        <span className="text-[12px] ml-[2px]">1:1</span>
        <span className="ml-[2px]">
          <Caret cls="border-t-[#111]" />
        </span>
      </St>
      <St w="w-[23px]">
        <Ic s={18}>
          <path d="M8 2l2 9 5 6-7-3-6 3 5-6z" fill="#fff" stroke="#333" />
          <circle cx="14" cy="9" r="2.500" fill="#f0a030" />
        </Ic>
      </St>
      <St>
        <Ic s={18}>
          <path d="M10 2l2 9 6 6-8-3-8 3 6-6z" fill="#ddd" stroke="#999" />
        </Ic>
      </St>
      <div className="w-[5px]" />
      <St cls="bg-[#c6c6c6] border-l">
        <Ic s={18}>
          <circle cx="10" cy="10" r="3" strokeWidth="1.600" />
          <circle cx="10" cy="10" r="7" strokeWidth="2.500" strokeDasharray="3 1.500" />
        </Ic>
      </St>
      <St w="w-[23px]">
        <Ic s={18}>
          <rect x="4" y="9" width="12" height="9" fill="#fff" strokeWidth="1.400" />
          <path d="M6 9V6a4 4 0 0 1 8 0v3M10 12v3" strokeWidth="1.400" />
        </Ic>
      </St>
      <St>
        <Ic s={18}>
          <rect x="2" y="4" width="13" height="9" fill="#999" />
          <path d="M4 2v2M7 2v2M10 2v2M13 2v2M4 13v2M7 13v2" />
          <circle cx="15" cy="13" r="2.500" fill="#f0a030" stroke="#c70" />
        </Ic>
      </St>
      <St w="w-[55px]" cls="bg-gradient-to-b from-[#999] to-[#b5b5b5] gap-[9px]">
        <Ic s={19}>
          <rect x="3" y="3" width="12" height="12" fill="#e8c84a" stroke="#234" />
          <path d="M8 16l3 3 7-8" stroke="#3a9a3a" strokeWidth="2.500" />
        </Ic>
        <Ic s={19}>
          <path d="M10 1a6 6 0 0 0-3 11v3h6v-3a6 6 0 0 0-3-11z" fill="#f8e9a0" stroke="#a89a50" />
        </Ic>
      </St>
      <St w="w-[12px]">
        <Caret cls="border-t-[#111]" />
      </St>
      <St>
        <Ic s={18}>
          <rect x="3" y="3" width="14" height="14" fill="#fff" strokeWidth="1.400" />
          <path d="M3 6h14" strokeWidth="2" />
        </Ic>
      </St>
      <div className="w-[13px] flex flex-wrap justify-end gap-[1px] pt-[6px] ml-[2px]">
        <span className="w-[2px] h-[2px] bg-[#999] ml-[6px]" />
        <span className="w-[2px] h-[2px] bg-[#999] mr-[4px]" />
        <span className="w-[2px] h-[2px] bg-[#999]" />
      </div>
    </div>
  )
}

function Taskbar() {
  const Task = ({ label, active = false, w, icon }: { label: string; active?: boolean; w: string; icon: ReactNode }) => (
    <div
      className={
        "h-[24px] mt-[1px] flex items-center pl-[7px] gap-[4px] text-[11.5px] text-white rounded-[3px] shrink-0 whitespace-nowrap " +
        w +
        (active ? " bg-[#1e4fb0] border border-[#17408f]" : " bg-gradient-to-b from-[#4f90f5] to-[#3a7aea] border border-[#2f66cf]")
      }
    >
      {icon}
      <span>{label}</span>
    </div>
  )
  return (
    <div className="h-[30px] flex items-center bg-gradient-to-b from-[#2a62d6] via-[#2560da] to-[#1e4fc0] border-t-[2px] border-[#4b8bf0] shrink-0 font-['Liberation_Sans',sans-serif]">
      <div className="w-[96px] h-full rounded-r-[10px] bg-gradient-to-b from-[#6fb56a] via-[#3f9440] to-[#2e7a30] flex items-center pl-[10px] gap-[6px] shrink-0">
        <svg width="19" height="18" viewBox="0 0 19 18">
          <path d="M1 3l8-2v7H1z" fill="#e8562a" />
          <path d="M10 1l8 1v7h-8z" fill="#7bbf3f" />
          <path d="M1 9h8v7l-8-1z" fill="#3f8fe0" />
          <path d="M10 10h8v7l-8-1z" fill="#f5c52a" />
        </svg>
        <span className="text-white font-bold italic text-[17px] leading-none">пуск</span>
      </div>
      <div className="flex items-center gap-[8px] ml-[11px] w-[91px] shrink-0">
        <span className="text-[#7cc4ff] font-bold italic text-[24px] leading-none font-['Liberation_Serif',serif] w-[14px] -mt-[5px]">e</span>
        <span className="w-[15px] h-[15px] rounded-full bg-[conic-gradient(#e33,#ea3,#5b4,#38c,#e33)] flex items-center justify-center">
          <span className="w-0 h-0 border-y-[3px] border-y-transparent border-l-[5px] border-l-white" />
        </span>
        <span className="w-[14px] h-[15px] bg-[#dce8fa] border border-[#36c] rounded-[2px] text-[#225] text-[10px] leading-none flex items-center justify-center">✎</span>
        <span className="text-[#cde] text-[10px] -mt-[8px]">»</span>
      </div>
      <div className="flex gap-[1px]">
        <Task
          label="Учеб пособ по Auto..."
          w="w-[159px]"
          icon={
            <svg width="16" height="14" viewBox="0 0 16 14">
              <path d="M1 2h5l2 2h7v9H1z" fill="#f6d36a" stroke="#b08a20" />
            </svg>
          }
        />
        <Task
          label="AutoCAD 2011 - [При..."
          w="w-[160px]"
          active
          icon={
            <svg width="16" height="16" viewBox="0 0 16 16">
              <rect width="16" height="16" fill="#222" />
              <rect width="16" height="8" fill="#eee" />
              <polygon points="3,12 7,2 10,2 13,12 10,12 9,9 7,9 6,12" fill="#d11c1c" />
            </svg>
          }
        />
        <Task
          label="Лабораторн практ-..."
          w="w-[158px]"
          icon={
            <svg width="16" height="16" viewBox="0 0 16 16">
              <path d="M3 1h9l2 2v12H3z" fill="#fff" stroke="#345" />
              <rect x="1" y="4" width="7" height="7" fill="#2a5ab0" />
              <path d="M9 5h3M9 8h3M5 13h7" stroke="#345" />
            </svg>
          }
        />
      </div>
      <div className="flex-1 flex items-center justify-end h-full">
        <span className="w-[17px] h-[20px] bg-[#3f78dc] text-white text-[11px] flex items-center justify-center mr-[9px]">EN</span>
        <span className="w-[16px] h-[12px] bg-white border border-[#222] mr-[7px] bg-[repeating-linear-gradient(90deg,#222_0_1px,#fff_1px_3px)]" />
        <span className="w-[13px] h-[15px] bg-[#fff8c0] border border-[#222] text-[#1a2a90] font-bold text-[11px] leading-none flex items-center justify-center mr-[15px]">?</span>
        <div className="w-[93px] h-full bg-gradient-to-b from-[#1a9be8] via-[#16a0ee] to-[#1282d0] border-l border-[#0f5fb0] flex items-center relative pl-[10px]">
          <span className="absolute -left-[9px] top-[4px] w-[18px] h-[18px] rounded-full bg-[#3c7ae6] border border-white flex items-center justify-center">
            <ChevronLeft size={13} color="#fff" strokeWidth={4} />
          </span>
          <svg width="15" height="16" viewBox="0 0 15 16">
            <path d="M0 1h5v5l5-5h5L8 8l6 7H9L5 10v5H0z" fill="#e3132b" stroke="#fff" strokeWidth="0.5" />
            <path d="M9 9l5 5-2 1z" fill="#111" />
          </svg>
          <span className="w-[14px] h-[13px] bg-[#777] border border-[#444] ml-[5px] mb-[3px]" />
          <span className="text-white text-[11.5px] ml-[6px]">19:44</span>
        </div>
      </div>
    </div>
  )
}

export default function App() {
  return (
    <div className="w-[1280px] h-[800px] flex flex-col overflow-hidden bg-[#bfe0bc] font-['Liberation_Sans',sans-serif]">
      <div className="h-[3px] bg-[#c6e2c2] shrink-0" />
      <div className="flex-1 flex flex-col min-h-0 mr-[3px] border-l-[4px] border-r-[4px] border-[#4a4a4a] bg-[#9b9b9b]">
        <TitleBar />
        <Tabs />
        <Ribbon />
        <div className="h-[6px] bg-gradient-to-b from-[#cfcfd6] to-[#8f8f8f] shrink-0" />
        <div className="flex-1 flex min-h-0 bg-[#ece9d8]">
          <div className="w-[26px] shrink-0 bg-[#e6e4d8] border-r border-[#85857a] pt-[4px] pb-[6px] pl-[1px] pr-[3px]">
            <div className="h-full bg-gradient-to-r from-[#e7e7ec] via-[#d4d4da] to-[#a7a7b0] border border-[#8a8a8a] rounded-t-[2px] flex flex-col items-center relative">
              <span className="w-[14px] h-[3px] mt-[1px] border-y border-dotted border-[#666]" />
              <span className="absolute bottom-[195px] left-[3px] [writing-mode:vertical-rl] rotate-180 font-bold text-[12px] text-black whitespace-nowrap tracking-[0.2px]">
                Диспетчер свойств слоев
              </span>
            </div>
          </div>
          <div className="flex-1 flex flex-col min-w-0">
            <div className="h-[486px] flex shrink-0">
              <div className="w-[1225px] relative bg-white border-t-[2px] border-[#85857a] shrink-0">
                <Drawing />
                <Tooltip />
                <NavBar />
              </div>
              <div className="flex-1 bg-gradient-to-r from-white to-[#f2f0e4] flex flex-col items-center pt-[2px]">
                <ScrollBtn>
                  <ChevronUp size={12} strokeWidth={3.5} />
                </ScrollBtn>
                <div className="mt-[2px]">
                  <ScrollBtn>
                    <span className="text-[9px] leading-none">≡</span>
                  </ScrollBtn>
                </div>
                <div className="mt-auto">
                  <ScrollBtn>
                    <ChevronDown size={12} strokeWidth={3.5} />
                  </ScrollBtn>
                </div>
              </div>
            </div>
            <LayoutTabs />
            <div className="h-[4px] bg-[#aeaeb8] shrink-0" />
            <CommandArea />
          </div>
        </div>
        <StatusBar />
        <div className="h-[2px] bg-[#555] shrink-0" />
      </div>
      <Taskbar />
    </div>
  )
}
